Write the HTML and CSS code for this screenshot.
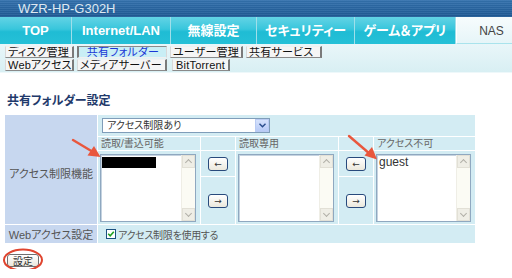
FILE: index.html
```html
<!DOCTYPE html>
<html lang="ja">

<head>
    <meta charset="UTF-8">
    <title>共有フォルダー設定</title>
    <link rel="stylesheet" href="styles.css">
</head>

<body>
    <div class="brand">WZR-HP-G302H</div>

    <div class="tabs">
        <div class="tab tab-top">TOP</div>
        <div class="tab tab-lan">Internet/LAN</div>
        <div class="tab tab-wl">無線設定</div>
        <div class="tab tab-sec">セキュリティー</div>
        <div class="tab tab-game">ゲーム＆アプリ</div>
        <div class="tab tab-nas active">NAS</div>
    </div>

    <div class="subnav">
        <span class="sub">ディスク管理</span>
        <span class="sub current">共有フォルダー</span>
        <span class="sub">ユーザー管理</span>
        <span class="sub">共有サービス</span>
        <span class="sub">Webアクセス</span>
        <span class="sub">メディアサーバー</span>
        <span class="sub sub-fit">BitTorrent</span>
    </div>

    <div class="content">
        <h2 class="title">共有フォルダー設定</h2>

        <div class="form-grid">
            <div class="label label-access">アクセス制限機能</div>
            <div class="cell span-all select-cell">
                <div class="select">
                    <span class="select-text">アクセス制限あり</span>
                    <span class="select-btn">
                        <svg width="7" height="5" viewBox="0 0 7 5"><path d="M0.5 0.8 L3.5 3.8 L6.5 0.8" fill="none" stroke="#2a4d8c" stroke-width="1.4"/></svg>
                    </span>
                </div>
            </div>

            <div class="cell head">読取/書込可能</div>
            <div class="cell"></div>
            <div class="cell head">読取専用</div>
            <div class="cell"></div>
            <div class="cell head">アクセス不可</div>

            <div class="cell list-cell">
                <div class="listbox">
                    <div class="options"><div class="option redacted"></div></div>
                    <div class="scroll"><span class="sb-up"></span><span class="sb-down"></span></div>
                </div>
            </div>
            <div class="cell btn-cell"><button class="move">&larr;</button></div>
            <div class="cell list-cell">
                <div class="listbox">
                    <div class="options"></div>
                    <div class="scroll"><span class="sb-up"></span><span class="sb-down"></span></div>
                </div>
            </div>
            <div class="cell btn-cell"><button class="move">&larr;</button></div>
            <div class="cell list-cell">
                <div class="listbox">
                    <div class="options"><div class="option">guest</div></div>
                    <div class="scroll"><span class="sb-up"></span><span class="sb-down"></span></div>
                </div>
            </div>
            <div class="cell btn-cell"><button class="move">&rarr;</button></div>
            <div class="cell btn-cell"><button class="move">&rarr;</button></div>

            <div class="label">Webアクセス設定</div>
            <div class="cell span-all check-cell">
                <span class="checkbox">
                    <svg width="8" height="8" viewBox="0 0 8 8"><path d="M1.2 3.8 L3.2 5.8 L6.8 1.8" fill="none" stroke="#21a121" stroke-width="1.6"/></svg>
                </span>
                <span class="check-text">アクセス制限を使用する</span>
            </div>
        </div>

        <button class="submit">設定</button>
    </div>

    <!-- 注釈（赤い矢印と丸） -->
    <svg class="marks" width="512" height="278" viewBox="0 0 512 278">
        <g stroke="#e9573d" stroke-width="2.4" fill="none" stroke-linecap="round">
            <line x1="73" y1="140" x2="93" y2="152" />
            <line x1="349" y1="136" x2="370" y2="154" />
            <ellipse cx="23" cy="260" rx="19" ry="10.5" stroke="#e0442e" stroke-width="2" />
        </g>
        <g fill="#e9573d">
            <polygon points="100.5,157 87.5,155.5 94,146" />
            <polygon points="377,159.5 364.5,155.5 372,147" />
        </g>
    </svg>
</body>

</html>
```

FILE: styles.css
```css
body {
    margin: 0;
    padding: 0;
    position: relative;
    background-color: #ffffff;
    font-family: "Liberation Sans", "Noto Sans CJK JP", sans-serif;
    font-feature-settings: "palt";
    overflow: hidden;
}

.brand {
    height: 17px;
    line-height: 17px;
    padding-left: 18px;
    font-size: 13px;
    color: #dfe9f2;
    background:
        repeating-linear-gradient(to bottom, rgba(255, 255, 255, 0.06) 0 1px, rgba(0, 0, 0, 0.04) 1px 2px),
        linear-gradient(to bottom, #3472ae, #1f5a95);
}

.tabs {
    display: flex;
    height: 27px;
}

.tab {
    box-sizing: border-box;
    height: 27px;
    line-height: 28px;
    text-align: center;
    color: #ffffff;
    font-size: 13px;
    font-weight: bold;
    border-right: 1px solid #9fdfea;
    background: linear-gradient(to bottom, #63d3e5 0%, #38c6dc 45%, #1fbcd4 55%, #25c0d7 100%);
}

.tab-top {
    width: 72px;
}

.tab-lan {
    width: 99px;
}

.tab-wl {
    width: 86px;
}

.tab-sec {
    width: 98px;
}

.tab-game {
    width: 101px;
}

.tab-nas {
    flex: 1;
    border-right: none;
}

.tab.active {
    padding-left: 14px;
    color: #444444;
    font-weight: normal;
    font-size: 12px;
    border-left: 1px solid #ffffff;
    border-bottom: 1px solid #a9e3ec;
    background: linear-gradient(to bottom, #f7fcfd, #e6f5f8);
}

/* サブメニューは2段、列を揃える */
.subnav {
    display: grid;
    grid-template-columns: 69px 90px 73px 76px;
    grid-auto-rows: 12px;
    column-gap: 3px;
    row-gap: 1px;
    height: 29px;
    box-sizing: border-box;
    padding: 2px 0 0 5px;
    background: linear-gradient(to bottom, #e9f6f9, #d8eff3);
    border-bottom: 1px solid #eef8fa;
}

.sub {
    box-sizing: border-box;
    height: 12px;
    line-height: 11px;
    padding: 0 1px 0 2px;
    font-size: 11px;
    letter-spacing: 0.2px;
    color: #111111;
    white-space: nowrap;
    overflow: hidden;
    background-color: #f5f5f5;
    border-top: 1px solid #f0f0f0;
    border-left: 1px solid #d8d8d8;
    border-right: 2px solid #7a7a7a;
    border-bottom: 1px solid #8a8a8a;
}

.sub.current {
    color: #1a36d6;
    text-align: center;
    background-color: #c9eef5;
    border-top: 1px solid #8a8a8a;
    border-left: 2px solid #7a7a7a;
    border-right: 1px solid #d8d8d8;
    border-bottom: 1px solid #f0f0f0;
}

.sub-fit {
    justify-self: start;
    margin-left: 2px;
    padding: 0 3px;
}

.content {
    padding: 0 5px;
}

.title {
    margin: 21px 0 7px 2px;
    height: 14px;
    line-height: 14px;
    font-size: 12px;
    font-weight: bold;
    color: #1f3a6b;
}

.form-grid {
    display: grid;
    grid-template-columns: 92px 102px 34px 102px 34px 101px;
    grid-template-rows: 21px 13px 25px 47px 18px;
    gap: 1px;
    width: 470px;
    background-color: #ffffff;
    font-size: 11px;
    color: #555555;
}

.label {
    display: flex;
    align-items: center;
    justify-content: center;
    background-color: #c7d7ef;
    color: #555555;
    font-size: 11px;
}

.label-access {
    grid-row: span 4;
    padding-top: 6px;
}

.cell {
    background-color: #d3ecf3;
}

.span-all {
    grid-column: span 5;
}

.select-cell {
    padding: 3px 0 0 4px;
}

.select {
    box-sizing: border-box;
    display: flex;
    width: 168px;
    height: 15px;
    border: 1px solid #7f9db9;
    background-color: #ffffff;
}

.select-text {
    flex: 1;
    padding-left: 4px;
    line-height: 13px;
    font-size: 10px;
    color: #333333;
}

.select-btn {
    box-sizing: border-box;
    width: 14px;
    height: 13px;
    display: flex;
    align-items: center;
    justify-content: center;
    border: 1px solid #b9cbf3;
    background: linear-gradient(to bottom, #d6e2fc, #b8cbf6);
}

.head {
    padding-left: 3px;
    line-height: 13px;
    font-size: 10px;
    color: #666666;
}

.list-cell {
    grid-row: span 2;
    box-sizing: border-box;
    padding: 3px 4px 2px 2px;
}

.listbox {
    box-sizing: border-box;
    display: flex;
    height: 100%;
    border: 1px solid #8fa8c0;
    box-shadow: inset 1px 1px 0 #c5d3e0;
    background-color: #ffffff;
}

.options {
    flex: 1;
    padding: 1px 0 0 1px;
}

.option {
    height: 12px;
    line-height: 12px;
    font-size: 12px;
    color: #333333;
    padding-left: 1px;
}

.option.redacted {
    width: 53px;
    height: 11px;
    margin-top: 1px;
    background-color: #000000;
}

.scroll {
    width: 13px;
    display: flex;
    flex-direction: column;
    justify-content: space-between;
    background-color: #fbfbf4;
    border-left: 1px solid #efeee6;
}

.sb-up,
.sb-down {
    position: relative;
    display: block;
    height: 13px;
    background-color: #efeee6;
    border: 1px solid #e2e0d6;
    box-sizing: border-box;
}

.sb-up::after,
.sb-down::after {
    content: '';
    position: absolute;
    left: 3px;
    width: 4px;
    height: 4px;
    border-left: 1px solid #b1b0a8;
    border-top: 1px solid #b1b0a8;
}

.sb-up::after {
    top: 4px;
    transform: rotate(45deg);
}

.sb-down::after {
    top: 2px;
    transform: rotate(225deg);
}

.btn-cell {
    display: flex;
    align-items: center;
    justify-content: center;
}

.move {
    box-sizing: border-box;
    width: 20px;
    height: 14px;
    padding: 0;
    border: 1px solid #284a7c;
    border-radius: 3px;
    background: linear-gradient(to bottom, #ffffff, #ebe8dc);
    font-size: 9px;
    line-height: 12px;
    color: #333333;
    font-family: "DejaVu Sans", sans-serif;
}

.check-cell {
    display: flex;
    align-items: center;
    padding-left: 8px;
    gap: 2px;
    color: #555555;
}

.check-text {
    font-size: 10px;
    letter-spacing: -0.3px;
}

.checkbox {
    box-sizing: border-box;
    width: 10px;
    height: 10px;
    display: flex;
    align-items: center;
    justify-content: center;
    border: 1px solid #1c5180;
    background-color: #ffffff;
}

.submit {
    box-sizing: border-box;
    margin: 11px 0 0 2px;
    width: 32px;
    height: 13px;
    padding: 0;
    border: 1px solid #6f6f6f;
    border-radius: 3px;
    background: linear-gradient(to bottom, #ffffff, #ebe8dc);
    font-family: "Noto Sans CJK JP", sans-serif;
    font-size: 10px;
    line-height: 11px;
    color: #333333;
}

.marks {
    position: absolute;
    left: 0;
    top: 0;
    pointer-events: none;
}
```
